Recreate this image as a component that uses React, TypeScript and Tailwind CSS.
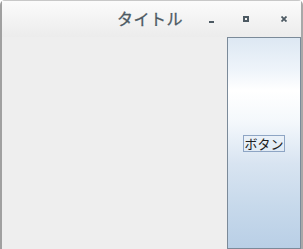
export default function App() {
  return (
    <div className="w-[303px] h-[249px] bg-white overflow-hidden">
      <div className="w-full h-full flex flex-col rounded-t-[5px] border-t border-t-[#c8c8c8] border-l-2 border-l-[#a0a0a0] border-r-2 border-r-[#a8a8a8] bg-[#eeeeee]">
        <div className="h-[36px] shrink-0 flex items-center bg-gradient-to-b from-[#fbfbfb] to-[#ececec] font-['Noto_Sans_CJK_JP',sans-serif] text-[#4d5a63]">
          <div className="flex-1" />
          <span className="text-[16px] font-normal leading-none mt-[-2px] mr-[26px] tracking-[0.5px] [-webkit-text-stroke:0.3px_#4d5a63]">タイトル</span>
          <span className="w-[5px] h-[2px] bg-[#4d5a63] mt-[6px] mr-[29px]" />
          <span className="w-[6px] h-[6px] border-2 border-[#4d5a63] mr-[32px]" />
          <svg width="6" height="6" viewBox="0 0 6 6" className="mr-[14px]">
            <path d="M0.5 0.5 L5.5 5.5 M5.5 0.5 L0.5 5.5" stroke="#4d5a63" strokeWidth="1.8" />
          </svg>
        </div>
        <div className="flex-1 min-h-0 flex">
          <div className="flex-1" />
          <div className="w-[74px] flex items-center justify-center border border-[#7b8a99] bg-[linear-gradient(to_bottom,#dde8f3_0%,#eef4fa_15%,#ffffff_25%,#f4f8fc_40%,#d8e4f1_60%,#c7d9eb_80%,#b9cfe6_100%)]">
            <span className="border border-[#8ea5c4] text-[13px] leading-[15px] text-[#202020] font-['Noto_Sans_CJK_JP',sans-serif]">ボタン</span>
          </div>
        </div>
      </div>
    </div>
  )
}
